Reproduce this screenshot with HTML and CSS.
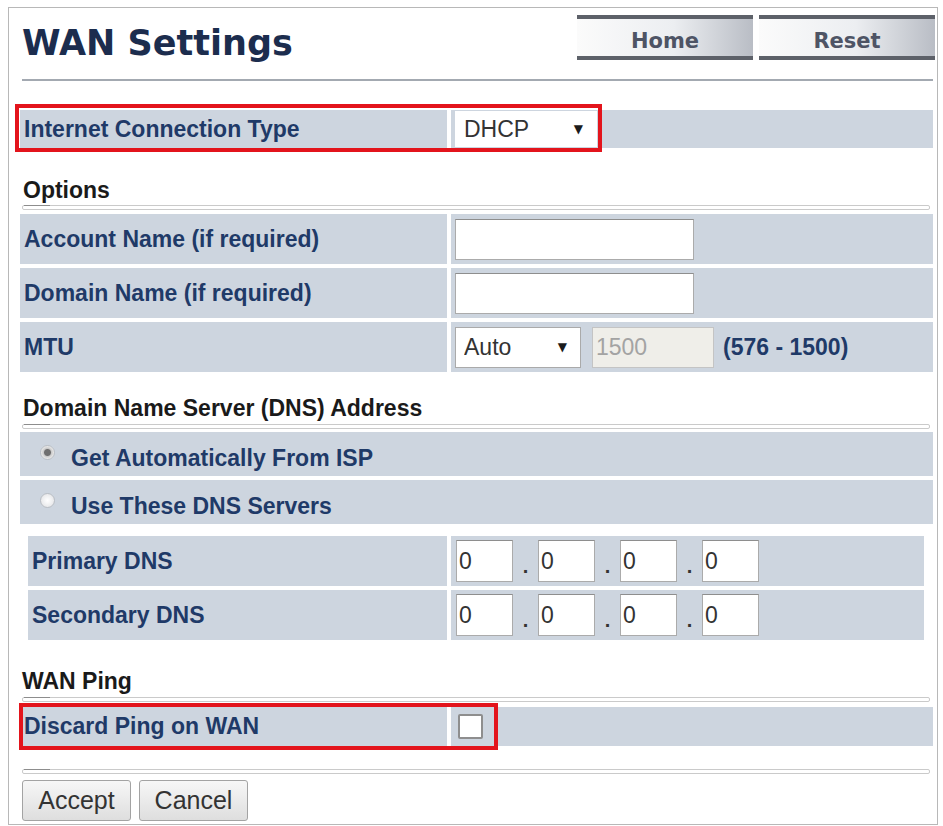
FILE: index.html
```html
<!DOCTYPE html>
<html lang="en">
<head>
    <meta charset="UTF-8">
    <meta name="viewport" content="width=device-width, initial-scale=1.0">
    <title>WAN Settings</title>
    <link rel="stylesheet" href="styles.css">
</head>
<body>
    <div class="page">
        <div class="header">
            <h1 class="title">WAN Settings</h1>
            <div class="nav">
                <button type="button" class="nav-btn">Home</button>
                <button type="button" class="nav-btn">Reset</button>
            </div>
        </div>
        <div class="rule"></div>

        <form onsubmit="event.preventDefault();">
            <div class="row row-type">
                <div class="label">Internet Connection Type</div>
                <div class="value">
                    <span class="select select-type">
                        <select name="wan_type">
                            <option>DHCP</option>
                            <option>Static IP</option>
                            <option>PPPoE</option>
                        </select>
                    </span>
                </div>
                <div class="mark mark-type"></div>
            </div>

            <h2 class="section section-options">Options</h2>
            <div class="bar"></div>
            <div class="rows">
                <div class="row">
                    <div class="label">Account Name (if required)</div>
                    <div class="value"><input type="text" class="text-input" name="account"></div>
                </div>
                <div class="row">
                    <div class="label">Domain Name (if required)</div>
                    <div class="value"><input type="text" class="text-input" name="domain"></div>
                </div>
                <div class="row">
                    <div class="label">MTU</div>
                    <div class="value">
                        <span class="select select-mtu">
                            <select name="mtu_mode">
                                <option>Auto</option>
                                <option>Manual</option>
                            </select>
                        </span>
                        <input type="text" class="mtu-input" value="1500" disabled>
                        <span class="range">(576 - 1500)</span>
                    </div>
                </div>
            </div>

            <h2 class="section section-dns">Domain Name Server (DNS) Address</h2>
            <div class="bar"></div>
            <div class="rows rows-choice">
                <label class="choice"><input type="radio" name="dns_mode" checked><span>Get Automatically From ISP</span></label>
                <label class="choice"><input type="radio" name="dns_mode"><span>Use These DNS Servers</span></label>
            </div>
            <div class="rows dns">
                <div class="row">
                    <div class="label">Primary DNS</div>
                    <div class="value ip">
                        <input type="text" value="0"><span class="dot">.</span><input type="text" value="0"><span class="dot">.</span><input type="text" value="0"><span class="dot">.</span><input type="text" value="0">
                    </div>
                </div>
                <div class="row">
                    <div class="label">Secondary DNS</div>
                    <div class="value ip">
                        <input type="text" value="0"><span class="dot">.</span><input type="text" value="0"><span class="dot">.</span><input type="text" value="0"><span class="dot">.</span><input type="text" value="0">
                    </div>
                </div>
            </div>

            <h2 class="section section-ping">WAN Ping</h2>
            <div class="bar bar-ping"></div>
            <div class="row row-ping">
                <div class="label">Discard Ping on WAN</div>
                <div class="value"><input type="checkbox" class="check" name="discard_ping"></div>
                <div class="mark mark-ping"></div>
            </div>

            <div class="bar bar-end"></div>
            <div class="actions">
                <button type="submit" class="action-btn">Accept</button>
                <button type="button" class="action-btn">Cancel</button>
            </div>
        </form>
    </div>
</body>
</html>
```

FILE: styles.css
```css
body {
    margin: 0;
    font-family: "Liberation Sans", Arial, sans-serif;
    background-color: #fff;
}
.page {
    box-sizing: border-box;
    width: 930px;
    height: 818px;
    margin: 7px 0 0 8px;
    padding: 0 4px 0 11px;
    border: 1px solid #b8b8b8;
}
.header {
    display: flex;
    justify-content: space-between;
    align-items: flex-start;
    height: 71px;
}
.title {
    margin: 15px 0 0 2px;
    font: bold 35px/40px "DejaVu Sans", Verdana, sans-serif;
    color: #1c2d4e;
}
.nav {
    display: flex;
    gap: 6px;
    margin: 7px -2px 0 0;
}
.nav-btn {
    box-sizing: border-box;
    width: 176px;
    height: 45px;
    padding: 6px 0 0;
    border: 0;
    border-top: 4px solid #5d6169;
    border-bottom: 4px solid #5d6169;
    background: linear-gradient(to right, #fbfbfb, #eceef1 55%, #b9bdc5);
    font: bold 21px "DejaVu Sans", Verdana, sans-serif;
    color: #4e5465;
}
.rule {
    height: 2px;
    margin-left: 2px;
    background-color: #a3a9b1;
}

/* form rows */
.rows {
    display: flex;
    flex-direction: column;
    gap: 4px;
}
.row {
    display: grid;
    grid-template-columns: 427px 1fr;
    column-gap: 4px;
    height: 50px;
    position: relative;
}
.row > .label,
.row > .value {
    display: flex;
    align-items: center;
    background-color: #cdd5df;
}
.label {
    padding-left: 4px;
    font-weight: bold;
    font-size: 23px;
    color: #1f3a68;
}
.value {
    padding-left: 4px;
}
.row-type {
    margin-top: 29px;
    height: 38px;
}
.row-ping {
    margin-top: 5px;
    height: 39px;
}
.section {
    margin: 0 0 0 3px;
    font-size: 23px;
    line-height: 26px;
    font-weight: bold;
    color: #1a1a1a;
}
.section-options {
    margin-top: 29px;
}
.section-dns {
    margin-top: 23px;
}
.section-ping {
    margin-top: 28px;
    margin-left: 2px;
}
.bar {
    position: relative;
    box-sizing: border-box;
    height: 5px;
    margin: 2px 3px 4px 2px;
    border: 1px solid #cacaca;
    border-radius: 2px;
}
.bar::before {
    content: "";
    position: absolute;
    left: 1px;
    top: -1px;
    width: 26px;
    height: 1px;
    background-color: #8d8d8d;
}
.section-dns + .bar {
    margin-top: 3px;
    margin-bottom: 3px;
}
.bar-ping {
    margin-top: 3px;
    margin-bottom: 0;
}
.bar-end {
    margin-top: 23px;
    margin-bottom: 0;
}

/* controls */
.select {
    position: relative;
    display: inline-block;
}
.select::after {
    content: "\25BC";
    position: absolute;
    right: 14px;
    top: 50%;
    transform: translateY(-50%);
    font: 12px "DejaVu Sans", sans-serif;
    color: #1b1b1b;
    pointer-events: none;
}
.select select {
    appearance: none;
    -webkit-appearance: none;
    box-sizing: border-box;
    display: block;
    padding: 0 0 0 8px;
    border: 1px solid #aaa;
    border-radius: 0;
    background-color: #fff;
    font: 23px "Liberation Sans", Arial, sans-serif;
    color: #333;
}
.select-type select {
    width: 142px;
    height: 36px;
    border-color: #fff;
}
.select-mtu select {
    width: 126px;
    height: 41px;
}
.text-input,
.mtu-input,
.ip input {
    box-sizing: border-box;
    height: 41px;
    margin: 0;
    border: 1px solid #ababab;
    border-top-color: #8e8e8e;
    border-radius: 0;
    font: 23px "Liberation Sans", Arial, sans-serif;
    color: #333;
}
.text-input {
    width: 239px;
    background-color: #fff;
}
.mtu-input {
    width: 122px;
    margin-left: 11px;
    padding-left: 3px;
    background-color: #efeee9;
    border-color: #c4c4c4;
    color: #a3a3a3;
}
.range {
    margin-left: 9px;
    font-weight: bold;
    font-size: 23px;
    color: #1f3a68;
}

/* dns radios */
.choice {
    display: flex;
    align-items: center;
    gap: 16px;
    height: 44px;
    padding-left: 20px;
    background-color: #cdd5df;
    font-weight: bold;
    font-size: 23px;
    color: #1f3a68;
}
.choice span {
    margin-top: 9px;
}
.choice input {
    appearance: none;
    -webkit-appearance: none;
    width: 15px;
    height: 15px;
    margin: 0 0 4px;
    border: 1px solid #b9bec4;
    border-radius: 50%;
    background: radial-gradient(circle, #ffffff, #dfe0e3);
}
.choice input:checked {
    background: radial-gradient(circle, #6f6f6f 0 3px, #c9c9c9 4px, #f2f2f2 7px);
}
.dns {
    margin: 12px 9px 0 8px;
}
.dns .row {
    grid-template-columns: 419px 1fr;
}
.ip {
    padding-left: 5px;
}
.ip input {
    width: 57px;
    height: 42px;
    padding-left: 2px;
    background-color: #fff;
}
.dot {
    width: 25px;
    align-self: center;
    padding-top: 10px;
    text-align: center;
    font-weight: bold;
    font-size: 20px;
    color: #333;
}
.check {
    appearance: none;
    -webkit-appearance: none;
    width: 25px;
    height: 25px;
    margin: 0 0 0 3px;
    border: 2px solid #8e8e8e;
    border-radius: 2px;
    background-color: #fff;
}

/* red annotation boxes */
.mark {
    position: absolute;
    box-sizing: border-box;
    border: 4px solid #e3141c;
    pointer-events: none;
}
.mark-type {
    left: -5px;
    top: -6px;
    width: 587px;
    height: 48px;
}
.mark-ping {
    left: -1px;
    top: -4px;
    width: 479px;
    height: 47px;
}

.actions {
    display: flex;
    gap: 8px;
    margin: 6px 0 0 2px;
}
.action-btn {
    box-sizing: border-box;
    width: 109px;
    height: 41px;
    padding: 0;
    border: 1px solid #a3a3a3;
    border-radius: 3px;
    background: linear-gradient(#f7f7f7, #dedede);
    font: 25px "Liberation Sans", Arial, sans-serif;
    color: #333;
}
```
